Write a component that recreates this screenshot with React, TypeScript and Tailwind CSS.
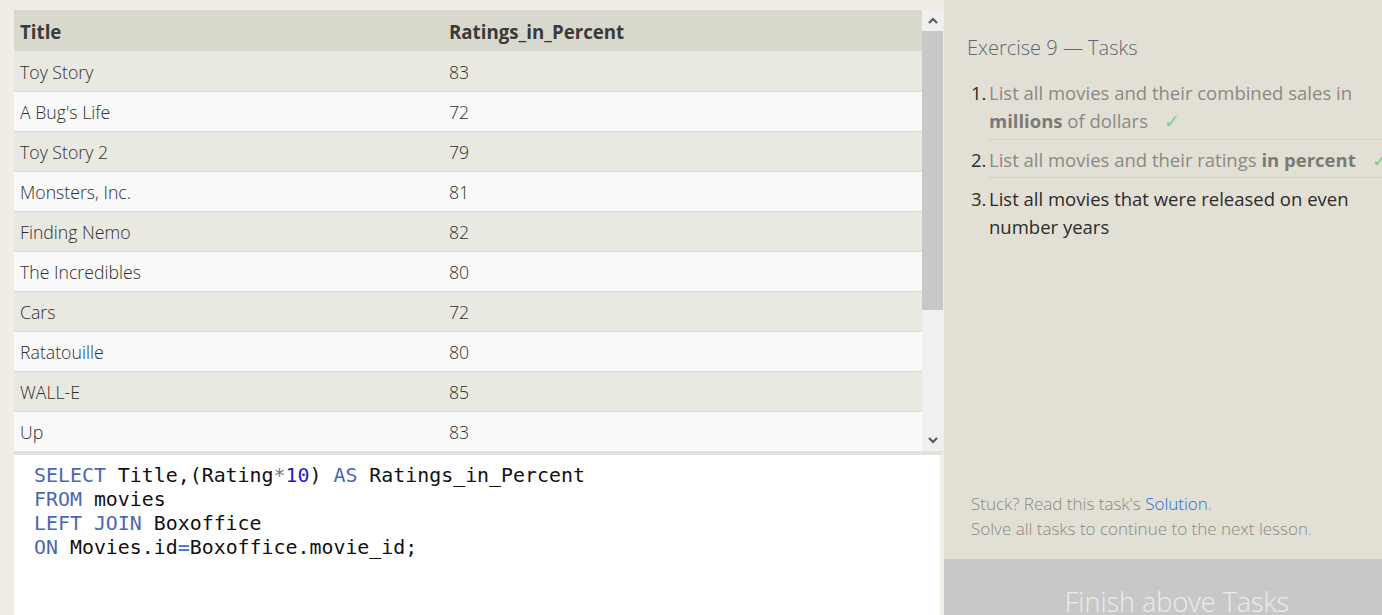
import React from "react";

const rows: [string, string][] = [
  ["Toy Story", "83"],
  ["A Bug's Life", "72"],
  ["Toy Story 2", "79"],
  ["Monsters, Inc.", "81"],
  ["Finding Nemo", "82"],
  ["The Incredibles", "80"],
  ["Cars", "72"],
  ["Ratatouille", "80"],
  ["WALL-E", "85"],
  ["Up", "83"],
];

const ui = { fontFamily: '"Open Sans", "Noto Sans", sans-serif' };
const mono = { fontFamily: '"DejaVu Sans Mono", "Liberation Mono", monospace' };

function Chevron({ up }: { up?: boolean }) {
  return (
    <svg width="10" height="7" viewBox="0 0 10 7">
      <path
        d={up ? "M1 6 L5 2 L9 6" : "M1 1 L5 5 L9 1"}
        fill="none"
        stroke="#555"
        strokeWidth="2"
      />
    </svg>
  );
}

export default function App() {
  return (
    <div className="w-[1382px] h-[615px] overflow-hidden bg-[#efede6]" style={ui}>
      <div className="flex w-[1410px] h-[645px]">
        {/* Left */}
        <div className="w-[944px] h-[615px] shrink-0 flex flex-col pl-[14px] pt-[10px]">
          <div className="flex h-[441px]">
            <table className="w-[908px] border-collapse text-[17.7px] text-[#2e2e2e]">
              <thead>
                <tr className="bg-[#d9d8cc] h-[41px]">
                  <th className="text-left font-bold text-[18.7px] text-[#3a3a3a] pl-[6px] pt-[3px] w-[429px]">Title</th>
                  <th className="text-left font-bold text-[18.7px] text-[#3a3a3a] pl-[6px] pt-[3px]">Ratings_in_Percent</th>
                </tr>
              </thead>
              <tbody>
                {rows.map(([t, r], i) => (
                  <tr
                    key={t}
                    className={`h-[40px] border-b border-[#dcdbd3] ${i % 2 === 0 ? "bg-[#eae9e1]" : "bg-[#f9f9f9]"}`}
                  >
                    <td className="pl-[6px] pt-[3px] font-light">{t}</td>
                    <td className="pl-[6px] pt-[3px] font-light">{r}</td>
                  </tr>
                ))}
              </tbody>
            </table>
            <div className="w-[21px] flex flex-col bg-[#f0f0f0]">
              <div className="h-[21px] flex items-center justify-center">
                <Chevron up />
              </div>
              <div className="h-[279px] bg-[#c8c8c8]" />
              <div className="flex-1" />
              <div className="h-[21px] flex items-center justify-center">
                <Chevron />
              </div>
            </div>
          </div>
          <div className="h-[4px] bg-[#e4e3db] w-[929px]" />
          <div className="flex-1 bg-white w-[926px] pt-[9px] pl-[20px] text-[19.9px] leading-[24px] text-[#111]" style={mono}>
            <div>
              <span className="text-[#4a68ad]">SELECT</span> Title,(Rating<span className="text-[#777]">*</span>
              <span className="text-[#1c1cc9]">10</span>) <span className="text-[#4a68ad]">AS</span> Ratings_in_Percent
            </div>
            <div>
              <span className="text-[#4a68ad]">FROM</span> movies
            </div>
            <div>
              <span className="text-[#4a68ad]">LEFT JOIN</span> Boxoffice
            </div>
            <div>
              <span className="text-[#4a68ad]">ON</span> Movies.id<span className="text-[#3d6bd0]">=</span>Boxoffice.movie_id;
            </div>
          </div>
        </div>

        {/* Right */}
        <div className="w-[466px] h-[645px] shrink-0 bg-[#e2e0d5] flex flex-col">
          <div className="pl-[23px] pt-[34px]">
            <div className="text-[20px] leading-[28px] text-[#5f6675] font-light">Exercise 9 — Tasks</div>
            <ol className="mt-[10px] text-[18.5px] leading-[28px]">
              <li className="flex pt-[7px] pb-[4px]">
                <span className="w-[22px] pl-[4px] text-[#2b2b2b] shrink-0">1.</span>
                <div className="flex-1 border-b border-[#d2d0c4] pb-[4px] text-[#8a8984]">
                  List all movies and their combined sales in
                  <br />
                  <b className="text-[#7b7a75]">millions</b> of dollars
                  <span className="ml-[16px] text-[#7fcf8b] font-light">✓</span>
                </div>
              </li>
              <li className="flex pt-[2px]">
                <span className="w-[22px] pl-[4px] text-[#2b2b2b] shrink-0">2.</span>
                <div className="flex-1 border-b border-[#d2d0c4] pb-[3px] whitespace-nowrap text-[#8a8984]">
                  List all movies and their ratings <b className="text-[#7b7a75]">in percent</b>
                  <span className="ml-[16px] text-[#7fcf8b] font-light">✓</span>
                </div>
              </li>
              <li className="flex pt-[7px]">
                <span className="w-[22px] pl-[4px] text-[#2b2b2b] shrink-0">3.</span>
                <div className="flex-1 text-[#2b2b2b]">
                  List all movies that were released on even
                  <br />
                  number years
                </div>
              </li>
            </ol>
          </div>
          <div className="flex-1" />
          <div className="pl-[27px] text-[17px] leading-[25px] text-[#8a8984] font-light">
            <div>
              Stuck? Read this task's <span className="text-[#1a6fd8]">Solution</span>.
            </div>
            <div>Solve all tasks to continue to the next lesson.</div>
          </div>
          <div className="mt-[18px] h-[86px] shrink-0 bg-[#c8c8c8] flex items-center justify-center text-[27px] text-[#ececec] font-light">
            Finish above Tasks
          </div>
        </div>
      </div>
    </div>
  );
}
